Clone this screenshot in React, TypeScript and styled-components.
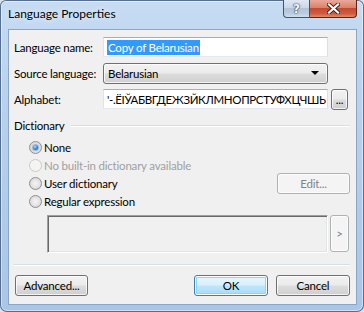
import styled, { createGlobalStyle, css } from 'styled-components';

const GlobalStyle = createGlobalStyle`
  html, body { margin: 0; padding: 0; }
  body {
    width: 364px;
    height: 312px;
    overflow: hidden;
    background: #d9e4f0;
    font-family: "Segoe UI", Lato, "Noto Sans", sans-serif;
    font-size: 11.5px;
    letter-spacing: -0.2px;
    color: #000;
  }
`;

const Window = styled.div`
  box-sizing: border-box;
  width: 364px;
  height: 312px;
  display: flex;
  flex-direction: column;
  border-radius: 6px 6px 7px 7px;
  background: linear-gradient(180deg, #c7dcf3 0%, #b9d2ed 30%, #a9c6e7 100%);
  box-shadow: inset 0 0 0 1px #55708f, inset 0 0 0 2px rgba(255, 255, 255, 0.45);
  overflow: hidden;
`;

const TitleBar = styled.div`
  height: 29px;
  display: flex;
  align-items: flex-start;
  padding-left: 8px;
`;

const Title = styled.div`
  margin-top: 6px;
  font-size: 12px;
  letter-spacing: 0;
  color: #000;
  text-shadow: 0 0 6px rgba(255, 255, 255, 0.9);
`;

const CaptionButtons = styled.div`
  margin-left: auto;
  margin-right: 7px;
  display: flex;
`;

const CaptionButton = styled.div<{ $close?: boolean }>`
  box-sizing: border-box;
  height: 18px;
  display: flex;
  align-items: center;
  justify-content: center;
  border: 1px solid #3f546d;
  border-top: none;
  ${(p) =>
    p.$close
      ? css`
          width: 47px;
          border-left: none;
          border-radius: 0 0 4px 0;
          border-color: #5b2419;
          background: linear-gradient(180deg, #e9a999 0%, #dc8169 45%, #c64a2f 50%, #cf5c3f 80%, #e08a68 100%);
        `
      : css`
          width: 27px;
          border-radius: 0 0 0 4px;
          background: linear-gradient(180deg, #dfe8f3 0%, #cad8e8 45%, #b2c3d8 50%, #bccde1 80%, #d0dff0 100%);
        `}
`;

const HelpGlyph = styled.span`
  font-family: "DejaVu Sans", sans-serif;
  font-weight: bold;
  font-size: 12px;
  line-height: 1;
  color: #f4f7fb;
  text-shadow: 0 0 1px #3b4c60, 0 0 1px #3b4c60, 0 0 2px #3b4c60;
`;

const Client = styled.div`
  box-sizing: border-box;
  height: 276px;
  margin: 0 7px 0 8px;
  border: 1px solid #8ca5c2;
  background: #f0f0f0;
  display: flex;
  flex-direction: column;
  padding: 7px 6px 7px 5px;
`;

const FormGrid = styled.div`
  display: grid;
  grid-template-columns: 89px 225px 3px 17px;
  grid-auto-rows: 20px;
  row-gap: 6px;
  align-items: center;
`;

const Label = styled.span`
  white-space: nowrap;
`;

const TextBox = styled.div<{ $tight?: boolean }>`
  box-sizing: border-box;
  height: 20px;
  min-width: 0;
  display: flex;
  align-items: center;
  padding: 0 3px;
  background: #fff;
  border: 1px solid #e3e9ef;
  border-top-color: #abadb3;
  border-left-color: #e2e3ea;
  border-right-color: #dbdfe6;
  overflow: hidden;
  white-space: nowrap;
  letter-spacing: ${(p) => (p.$tight ? '-0.35px' : 'inherit')};
`;

const Selected = styled.span`
  background: #3399ff;
  color: #fff;
  padding: 1px 1px;
`;

const buttonFace = css`
  border: 1px solid #707070;
  border-radius: 3px;
  background: linear-gradient(180deg, #f2f2f2 0%, #ebebeb 48%, #dddddd 52%, #cfcfcf 100%);
  box-shadow: inset 0 0 0 1px rgba(255, 255, 255, 0.75);
`;

const ComboBox = styled.div`
  box-sizing: border-box;
  height: 21px;
  display: flex;
  align-items: center;
  padding: 0 8px 0 4px;
  ${buttonFace}
`;

const ComboArrow = styled.span`
  margin-left: auto;
  width: 0;
  height: 0;
  border-left: 4px solid transparent;
  border-right: 4px solid transparent;
  border-top: 4px solid #000;
`;

const Button = styled.button<{ $w?: number; $h?: number; $default?: boolean }>`
  box-sizing: border-box;
  width: ${(p) => (p.$w ? `${p.$w}px` : 'auto')};
  height: ${(p) => p.$h ?? 21}px;
  margin: 0;
  padding: 0;
  font: inherit;
  letter-spacing: inherit;
  color: #000;
  display: flex;
  align-items: center;
  justify-content: center;
  ${buttonFace}
  ${(p) =>
    p.$default &&
    css`
      border-color: #3c7fb1;
      background: linear-gradient(180deg, #eaf6fd 0%, #d9f0fc 48%, #bee6fd 52%, #a7d9f5 100%);
      box-shadow: inset 0 0 0 1px #fff, inset 0 0 0 2px #8fd6f5;
    `}
  &:disabled {
    color: #838383;
    border-color: #adb2b5;
    background: #f4f4f4;
    box-shadow: inset 0 0 0 1px #fcfcfc;
  }
`;

const GroupHeader = styled.div`
  display: flex;
  align-items: center;
  margin-top: 9px;
  height: 15px;
`;

const GroupRule = styled.div`
  flex: 1;
  margin-left: 6px;
  height: 1px;
  background: #d5dfe5;
  border-bottom: 1px solid #fff;
`;

const RadioList = styled.div`
  display: grid;
  grid-auto-rows: 18px;
  margin-top: 5px;
  padding-left: 15px;
`;

const RadioRow = styled.div<{ $disabled?: boolean }>`
  display: flex;
  align-items: center;
  color: ${(p) => (p.$disabled ? '#a0a0a0' : '#000')};
`;

const RadioDot = styled.span<{ $checked?: boolean; $disabled?: boolean }>`
  box-sizing: border-box;
  width: 13px;
  height: 13px;
  margin-right: 2px;
  border-radius: 50%;
  border: 1px solid ${(p) => (p.$disabled ? '#c9c9c9' : '#8e8f8f')};
  background: ${(p) =>
    p.$disabled
      ? '#f4f4f4'
      : 'radial-gradient(circle at 50% 50%, #f4f4f4 0%, #e6e6e6 45%, #cbcbcb 100%)'};
  display: flex;
  align-items: center;
  justify-content: center;
  &::after {
    content: '';
    display: ${(p) => (p.$checked ? 'block' : 'none')};
    width: 5px;
    height: 5px;
    border-radius: 50%;
    background: radial-gradient(circle at 40% 35%, #a9d8ff 0%, #2f78c7 60%, #1b4d8a 100%);
    box-shadow: 0 0 1px 1px rgba(40, 110, 190, 0.45);
  }
`;

const EditButton = styled(Button)`
  margin-left: auto;
  align-self: center;
`;

const RegexRow = styled.div`
  display: flex;
  gap: 2px;
  margin-top: 5px;
  padding-left: 33px;
  height: 38px;
`;

const RegexBox = styled.div`
  box-sizing: border-box;
  width: 281px;
  height: 38px;
  background: #f0f0f0;
  border: 1px solid;
  border-color: #a0a0a0 #ffffff #ffffff #a0a0a0;
  box-shadow: inset 1px 1px 0 #696969, inset -1px -1px 0 #e3e3e3;
`;

const Separator = styled.div`
  margin-top: 11px;
  height: 1px;
  background: #d5dfe5;
  border-bottom: 1px solid #fff;
`;

const ButtonBar = styled.div`
  display: flex;
  gap: 8px;
  margin-top: 9px;
  padding-left: 1px;
`;

const Spacer = styled.div`
  flex: 1;
`;

export default function App() {
  return (
    <>
      <GlobalStyle />
      <Window>
        <TitleBar>
          <Title>Language Properties</Title>
          <CaptionButtons>
            <CaptionButton>
              <HelpGlyph>?</HelpGlyph>
            </CaptionButton>
            <CaptionButton $close>
              <svg width="13" height="11" viewBox="0 0 13 11">
                <path d="M2 1.5 L11 9.5 M11 1.5 L2 9.5" stroke="#4a1a12" strokeWidth="4" strokeLinecap="square" />
                <path d="M2 1.5 L11 9.5 M11 1.5 L2 9.5" stroke="#ffffff" strokeWidth="2.2" strokeLinecap="square" />
              </svg>
            </CaptionButton>
          </CaptionButtons>
        </TitleBar>
        <Client>
          <FormGrid>
            <Label>Language name:</Label>
            <TextBox>
              <Selected>Copy of Belarusian</Selected>
            </TextBox>
            <span />
            <span />
            <Label>Source language:</Label>
            <ComboBox>
              Belarusian
              <ComboArrow />
            </ComboBox>
            <span />
            <span />
            <Label>Alphabet:</Label>
            <TextBox $tight>'-.ЁІЎАБВГДЕЖЗЙКЛМНОПРСТУФХЦЧШЬ</TextBox>
            <span />
            <Button $w={17}>...</Button>
          </FormGrid>

          <GroupHeader>
            <span>Dictionary</span>
            <GroupRule />
          </GroupHeader>
          <RadioList>
            <RadioRow>
              <RadioDot $checked />
              None
            </RadioRow>
            <RadioRow $disabled>
              <RadioDot $disabled />
              No built-in dictionary available
            </RadioRow>
            <RadioRow>
              <RadioDot />
              User dictionary
              <EditButton $w={73} disabled>
                Edit...
              </EditButton>
            </RadioRow>
            <RadioRow>
              <RadioDot />
              Regular expression
            </RadioRow>
          </RadioList>
          <RegexRow>
            <RegexBox />
            <Button $w={19} $h={37} disabled>
              &gt;
            </Button>
          </RegexRow>

          <Separator />
          <ButtonBar>
            <Button $w={73}>Advanced...</Button>
            <Spacer />
            <Button $w={74} $default>
              OK
            </Button>
            <Button $w={74}>Cancel</Button>
          </ButtonBar>
        </Client>
      </Window>
    </>
  );
}
